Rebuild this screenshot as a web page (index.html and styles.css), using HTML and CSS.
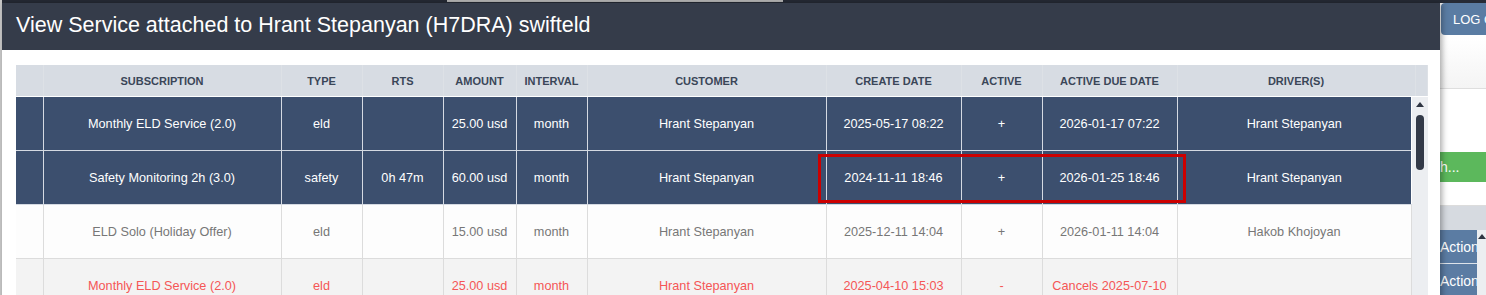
FILE: index.html
```html
<!DOCTYPE html>
<html lang="en">
<head>
    <meta charset="UTF-8">
    <meta name="viewport" content="width=device-width, initial-scale=1.0">
    <title>View Service</title>
    <link rel="stylesheet" href="styles.css">
</head>
<body>

    <!-- Page behind the modal -->
    <div class="page">
        <div class="page-main">
            <div class="topbar"><span class="ticker"></span></div>
        </div>
        <div class="page-side">
            <div class="side-top"></div>
            <button class="logout">LOG OUT</button>
            <div class="side-panel"></div>
            <div class="side-blank"></div>
            <div class="side-search">h...</div>
            <div class="side-blank short"></div>
            <div class="side-head"></div>
            <div class="side-actions">
                <div class="action-list">
                    <button class="action">Actions</button>
                    <button class="action">Actions</button>
                </div>
                <div class="side-scroll"><span class="arrow-up"></span></div>
            </div>
        </div>
    </div>

    <!-- Modal -->
    <div class="modal">
        <div class="modal-header">
            <h2>View Service attached to Hrant Stepanyan (H7DRA) swifteld</h2>
        </div>
        <div class="modal-body">
            <table class="grid head">
                <colgroup>
                    <col style="width:27px"><col style="width:238px"><col style="width:81px"><col style="width:81px">
                    <col style="width:73px"><col style="width:71px"><col style="width:239px"><col style="width:135px">
                    <col style="width:81px"><col style="width:135px"><col style="width:238px"><col style="width:12px">
                </colgroup>
                <tr>
                    <th></th>
                    <th>Subscription</th>
                    <th>Type</th>
                    <th>RTS</th>
                    <th>Amount</th>
                    <th>Interval</th>
                    <th>Customer</th>
                    <th>Create Date</th>
                    <th>Active</th>
                    <th>Active Due Date</th>
                    <th>Driver(s)</th>
                    <th></th>
                </tr>
            </table>

            <div class="rows-wrap">
                <table class="grid rows">
                    <colgroup>
                        <col style="width:27px"><col style="width:238px"><col style="width:81px"><col style="width:81px">
                        <col style="width:73px"><col style="width:71px"><col style="width:239px"><col style="width:135px">
                        <col style="width:81px"><col style="width:135px"><col style="width:234px">
                    </colgroup>
                    <tr class="selected">
                        <td></td>
                        <td>Monthly ELD Service (2.0)</td>
                        <td>eld</td>
                        <td></td>
                        <td>25.00 usd</td>
                        <td>month</td>
                        <td>Hrant Stepanyan</td>
                        <td>2025-05-17 08:22</td>
                        <td>+</td>
                        <td>2026-01-17 07:22</td>
                        <td>Hrant Stepanyan</td>
                    </tr>
                    <tr class="selected">
                        <td></td>
                        <td>Safety Monitoring 2h (3.0)</td>
                        <td>safety</td>
                        <td>0h 47m</td>
                        <td>60.00 usd</td>
                        <td>month</td>
                        <td>Hrant Stepanyan</td>
                        <td>2024-11-11 18:46</td>
                        <td>+</td>
                        <td>2026-01-25 18:46</td>
                        <td>Hrant Stepanyan</td>
                    </tr>
                    <tr class="plain">
                        <td></td>
                        <td>ELD Solo (Holiday Offer)</td>
                        <td>eld</td>
                        <td></td>
                        <td>15.00 usd</td>
                        <td>month</td>
                        <td>Hrant Stepanyan</td>
                        <td>2025-12-11 14:04</td>
                        <td>+</td>
                        <td>2026-01-11 14:04</td>
                        <td>Hakob Khojoyan</td>
                    </tr>
                    <tr class="cancelled">
                        <td></td>
                        <td>Monthly ELD Service (2.0)</td>
                        <td>eld</td>
                        <td></td>
                        <td>25.00 usd</td>
                        <td>month</td>
                        <td>Hrant Stepanyan</td>
                        <td>2025-04-10 15:03</td>
                        <td>-</td>
                        <td>Cancels 2025-07-10</td>
                        <td></td>
                    </tr>
                </table>
                <div class="scrollbar">
                    <span class="arrow-up"></span>
                    <span class="thumb"></span>
                </div>
                <!-- highlight drawn over the dates -->
                <div class="mark"></div>
            </div>
        </div>
    </div>

</body>
</html>
```

FILE: styles.css
```css
body {
    margin: 0;
    padding: 0;
    font-family: "Liberation Sans", Arial, Helvetica, sans-serif;
    height: 295px;
    overflow: hidden;
    position: relative;
    background: #f4f4f4;
}

/* Background page */
.page {
    display: grid;
    grid-template-columns: 1fr 46px;
    height: 295px;
}

.page-main {
    border-left: 2px solid #c9c9c9;
}

.topbar {
    height: 3px;
    background: #262b36;
    padding-left: 445px;
}

.ticker {
    display: block;
    width: 336px;
    height: 2px;
    background: #b8b8b8;
}

.page-side {
    display: flex;
    flex-direction: column;
    background: #fff;
}

.side-top {
    height: 3px;
    background: #262b36;
}

.logout {
    height: 32px;
    margin-left: 1px;
    padding: 0 0 0 12px;
    border: none;
    border-radius: 4px 0 0 4px;
    background: #5a7ca3;
    color: #fff;
    font: 13px "Liberation Sans", Arial, sans-serif;
    text-align: left;
    white-space: nowrap;
    overflow: hidden;
}

.side-panel {
    height: 50px;
    margin-top: 3px;
    background: linear-gradient(#fff, #f4f4f4);
    border-bottom: 1px solid #dedede;
}

.side-blank {
    height: 63px;
    background: #fff;
}

.side-blank.short {
    height: 23px;
    border-bottom: 1px solid #dcdcdc;
}

.side-search {
    height: 30px;
    line-height: 30px;
    background: #5cb85c;
    color: #fff;
    font-size: 14px;
    white-space: nowrap;
    overflow: hidden;
}

.side-head {
    height: 24px;
    background: #d6dae0;
}

.side-actions {
    display: flex;
}

.action-list {
    display: flex;
    flex-direction: column;
    width: 37px;
}

.action {
    height: 34px;
    padding: 0;
    border: none;
    border-bottom: 1px solid #dde3ea;
    background: #5b7ca3;
    color: #fff;
    font: 14px "Liberation Sans", Arial, sans-serif;
    text-align: left;
    white-space: nowrap;
    overflow: hidden;
}

.side-scroll {
    flex: 1;
    background: #eceef1;
    display: flex;
    justify-content: center;
    padding-top: 4px;
}

/* Modal */
.modal {
    position: absolute;
    top: 3px;
    left: 2px;
    width: 1438px;
    height: 320px;
    background: #fff;
    box-shadow: 2px 0 6px rgba(0, 0, 0, 0.35);
}

.modal-header {
    height: 47px;
    background: #353c4a;
    display: flex;
    align-items: center;
    padding-left: 14px;
}

.modal-header h2 {
    margin: 0 0 2px;
    color: #fff;
    font-size: 21.5px;
    font-weight: normal;
}

.modal-body {
    padding: 15px 0 0 14px;
}

.grid {
    border-collapse: collapse;
    table-layout: fixed;
}

.grid.head {
    width: 1411px;
}

.grid th {
    height: 31px;
    padding: 0;
    background: #d7dce3;
    border: 1px solid #dde1e6;
    border-top: none;
    border-bottom: 1px solid #fff;
    color: #3a4658;
    font-size: 11px;
    font-weight: bold;
    text-transform: uppercase;
    text-align: center;
}

.grid th:first-child {
    border-left: none;
}

.rows-wrap {
    position: relative;
    display: flex;
    align-items: flex-start;
}

.grid.rows {
    width: 1395px;
}

.grid td {
    height: 53px;
    padding: 0;
    border: 1px solid #dcdcdc;
    border-top: none;
    font-size: 12.7px;
    text-align: center;
    white-space: nowrap;
}

.grid td:first-child {
    border-left: none;
}

.grid tr.selected td {
    background: #3c4f6e;
    color: #fff;
    border-color: #d5dae2;
}

.grid tr.selected td:last-child {
    border-right: none;
}

.grid tr.plain td {
    background: #fdfdfd;
    color: #777;
}

.grid tr.cancelled td {
    background: #f3f3f3;
    color: #f55656;
}

.scrollbar {
    width: 16px;
    height: 220px;
    background: #eceef1;
    display: flex;
    flex-direction: column;
    align-items: center;
    padding-top: 5px;
    box-sizing: border-box;
}

.arrow-up {
    width: 0;
    height: 0;
    border-left: 4px solid transparent;
    border-right: 4px solid transparent;
    border-bottom: 5px solid #2f3542;
}

.thumb {
    width: 8px;
    height: 55px;
    margin-top: 8px;
    border-radius: 4px;
    background: #333a48;
}

.mark {
    position: absolute;
    left: 802px;
    top: 57px;
    width: 362px;
    height: 43px;
    border: 3px solid #cc0000;
}
```
